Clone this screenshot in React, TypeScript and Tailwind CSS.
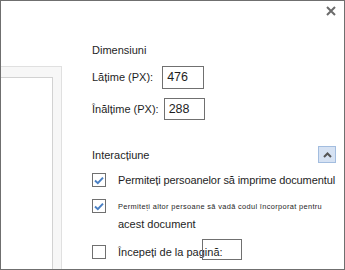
import React from 'react';

const font = { fontFamily: '"Liberation Sans", Arial, sans-serif' };

const Check = ({ checked }: { checked: boolean }) => (
  <div className="w-[14px] h-[14px] shrink-0 border border-[#707070] bg-white flex items-center justify-center">
    {checked && (
      <svg width="10" height="9" viewBox="0 0 10 9">
        <path d="M1 4.6 L3.8 7.2 L9 1.6" fill="none" stroke="#4a80c4" strokeWidth="2" />
      </svg>
    )}
  </div>
);

const App: React.FC = () => {
  return (
    <div
      className="relative w-[345px] h-[270px] bg-white border border-[#6f6f6f] flex text-[#1e1e1e] overflow-hidden"
      style={font}
    >
      {/* close button */}
      <button className="absolute top-[4px] right-[8px] w-[11px] h-[11px] flex items-center justify-center">
        <svg width="10" height="10" viewBox="0 0 10 10">
          <path d="M1 1 L9 9 M9 1 L1 9" stroke="#6b6b6b" strokeWidth="2" />
        </svg>
      </button>

      {/* preview area */}
      <div className="w-[61px] shrink-0 pt-[65px] flex flex-col">
        <div className="flex-1 border-t border-r border-[#e0e0e0] bg-[#f7f7f7] pt-[10px] pr-[8px] flex flex-col">
          <div className="flex-1 bg-white border-t border-r border-[#d2d2d2]" />
        </div>
      </div>

      {/* settings */}
      <div className="flex-1 min-w-0 pl-[30px] pr-[8px] flex flex-col">
        <div className="mt-[41px] h-[16px] leading-[16px] text-[11px]">Dimensiuni</div>

        <div className="mt-[8px] h-[22px] flex items-center text-[11px]">
          <span>Lățime (PX):</span>
          <div className="ml-[9px] w-[42px] h-[23px] border border-[#707070] px-[4px] flex items-center text-[12.5px]">476</div>
        </div>

        <div className="mt-[10px] h-[22px] flex items-center text-[11px]">
          <span>Înălțime (PX):</span>
          <div className="ml-[5px] w-[41px] h-[22px] border border-[#707070] px-[4px] flex items-center text-[12.5px]">288</div>
        </div>

        <div className="mt-[26px] h-[17px] flex items-center justify-between">
          <span className="text-[11px] mt-[2px]">Interacțiune</span>
          <div className="w-[18px] h-[17px] bg-[#d6e2f3] border border-[#a3bddf] flex items-center justify-center">
            <svg width="9" height="6" viewBox="0 0 9 6">
              <path d="M1 5 L4.5 1.5 L8 5" fill="none" stroke="#555" strokeWidth="2" />
            </svg>
          </div>
        </div>

        <div className="mt-[10px] h-[14px] flex items-center gap-[12px]">
          <Check checked />
          <span className="text-[11px] whitespace-nowrap tracking-[-0.1px]">Permiteți persoanelor să imprime documentul</span>
        </div>

        <div className="mt-[12px] h-[14px] flex items-center gap-[12px]">
          <Check checked />
          <span className="text-[7.4px] whitespace-nowrap mt-[2px] tracking-[0.35px]">
            Permiteți altor persoane să vadă codul încorporat pentru
          </span>
        </div>
        <div className="pl-[26px] mt-[3px] h-[16px] leading-[16px] text-[11px]">acest document</div>

        <div className="mt-[13px] h-[14px] flex items-center gap-[12px]">
          <Check checked={false} />
          <div className="relative text-[11px] whitespace-nowrap">
            Începeți de la pagină:
            <div className="absolute left-[84px] top-[-5px] w-[40px] h-[21px] border border-[#707070]" />
          </div>
        </div>
      </div>
    </div>
  );
};

export default App;
